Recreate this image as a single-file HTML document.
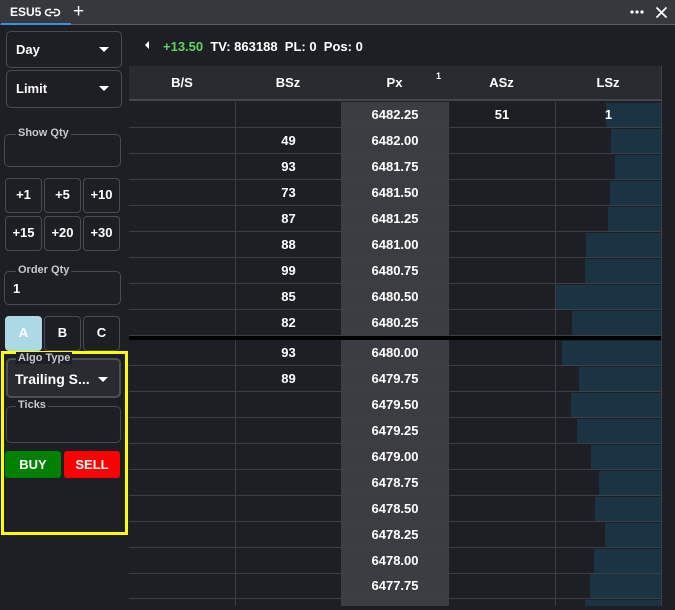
<!DOCTYPE html><html><head><style>
*{box-sizing:border-box;margin:0;padding:0}
body{width:675px;height:610px;background:#1e1f24;font-family:"Liberation Sans",sans-serif;color:#fff;font-weight:bold;font-size:13px;position:relative;overflow:hidden}
.a{position:absolute}
.box{position:absolute;border:1px solid #4a4b50;border-radius:5px}
.caret{position:absolute;width:0;height:0;border-left:5px solid transparent;border-right:5px solid transparent;border-top:5px solid #fff}
.lg{position:absolute;font-size:11px;color:#c8c8cc;background:#1e1f24;padding:0 2px;font-weight:bold;line-height:12px}
.btn{position:absolute;border:1px solid #4a4b50;border-radius:4px;text-align:center;line-height:32px;font-size:13px}
.row{position:absolute;left:129px;width:532px;height:26px;border-bottom:1px solid #3e3f44}
.c{position:absolute;top:0;height:25px;line-height:26px;text-align:center;border-left:1px solid #3e3f44}
.px{background:#3c3d42;left:212px;width:107px}
.bar{position:absolute;top:1px;right:0;height:24px;background:#1b3444}
</style></head><body>
<div class="a" style="left:0;top:0;width:675px;height:25px;background:#37383d;border-bottom:1px solid #5c5d62"></div>
<div class="a" style="left:1px;top:23px;width:70px;height:2px;background:#3d8fe0"></div>
<div class="a" style="left:10px;top:5px;font-size:12px">ESU5</div>
<svg class="a" style="left:44px;top:7px" width="17" height="11" viewBox="0 0 17 11"><path d="M7 2.5H4.5a3 3 0 0 0 0 6H7M10 2.5h2.5a3 3 0 0 1 0 6H10M5.5 5.5h6" fill="none" stroke="#fff" stroke-width="1.6"/></svg>
<div class="a" style="left:73px;top:1px;font-size:19px;font-weight:normal">+</div>
<svg class="a" style="left:630px;top:9px" width="14" height="6" viewBox="0 0 14 6"><circle cx="2" cy="3" r="1.6" fill="#fff"/><circle cx="7" cy="3" r="1.6" fill="#fff"/><circle cx="12" cy="3" r="1.6" fill="#fff"/></svg>
<svg class="a" style="left:655px;top:6px" width="13" height="13" viewBox="0 0 13 13"><path d="M1.5 1.5L11.5 11.5M11.5 1.5L1.5 11.5" stroke="#fff" stroke-width="1.8"/></svg>

<div class="box" style="left:6px;top:31px;width:116px;height:37px"></div>
<div class="a" style="left:16px;top:42px">Day</div><div class="caret" style="left:99px;top:47px"></div>
<div class="box" style="left:6px;top:70px;width:116px;height:38px"></div>
<div class="a" style="left:16px;top:81px">Limit</div><div class="caret" style="left:99px;top:86px"></div>

<div class="box" style="left:4px;top:134px;width:117px;height:33px"></div><div class="lg" style="left:16px;top:127px">Show Qty</div>
<div class="btn" style="left:5px;top:178px;width:37px;height:35px">+1</div>
<div class="btn" style="left:44px;top:178px;width:37px;height:35px">+5</div>
<div class="btn" style="left:83px;top:178px;width:37px;height:35px">+10</div>
<div class="btn" style="left:5px;top:216px;width:37px;height:35px">+15</div>
<div class="btn" style="left:44px;top:216px;width:37px;height:35px">+20</div>
<div class="btn" style="left:83px;top:216px;width:37px;height:35px">+30</div>
<div class="box" style="left:4px;top:271px;width:117px;height:34px"></div><div class="lg" style="left:16px;top:264px">Order Qty</div>
<div class="a" style="left:13px;top:281px">1</div>
<div class="btn" style="left:5px;top:316px;width:37px;height:35px;background:#add8e6;border-color:#add8e6">A</div>
<div class="btn" style="left:44px;top:316px;width:37px;height:35px">B</div>
<div class="btn" style="left:83px;top:316px;width:37px;height:35px">C</div>

<div class="a" style="left:1px;top:351px;width:127px;height:184px;border:3px solid #ffff00"></div>
<div class="box" style="left:6px;top:358px;width:115px;height:40px;background:#2a2b30;border:2px solid #4e4f54"></div>
<div class="lg" style="left:16px;top:352px;background:#1e1f24">Algo Type</div>
<div class="a" style="left:15px;top:371px;font-size:14px">Trailing S...</div><div class="caret" style="left:98px;top:377px"></div>
<div class="box" style="left:6px;top:406px;width:115px;height:37px"></div><div class="lg" style="left:16px;top:399px">Ticks</div>
<div class="a" style="left:5px;top:451px;width:56px;height:27px;background:#008000;border-radius:3px;text-align:center;line-height:27px">BUY</div>
<div class="a" style="left:64px;top:451px;width:56px;height:27px;background:#ff0000;border-radius:3px;text-align:center;line-height:27px">SELL</div>

<div class="a" style="left:145px;top:41px;width:0;height:0;border-top:4px solid transparent;border-bottom:4px solid transparent;border-right:4px solid #fff"></div>
<div class="a" style="left:163px;top:39px"><span style="color:#5fd35f">+13.50</span>&nbsp; TV: 863188 &nbsp;PL: 0 &nbsp;Pos: 0</div>

<div class="a" style="left:129px;top:66px;width:532px;height:35px;background:#2a2b30;border-bottom:2px solid #46474c"></div>
<div class="a" style="left:129px;top:75px;width:106px;text-align:center">B/S</div>
<div class="a" style="left:235px;top:75px;width:106px;text-align:center">BSz</div>
<div class="a" style="left:341px;top:75px;width:107px;text-align:center">Px</div>
<div class="a" style="left:436px;top:71px;font-size:9px">1</div>
<div class="a" style="left:448px;top:75px;width:107px;text-align:center">ASz</div>
<div class="a" style="left:555px;top:75px;width:106px;text-align:center">LSz</div>

<div class="row" style="top:102px"><div class="c" style="left:0;width:106px;border:0"></div><div class="c" style="left:106px;width:106px"></div><div class="c px">6482.25</div><div class="c" style="left:319px;width:107px">51</div><div class="c" style="left:426px;width:106px"><div class="bar" style="width:55px"></div><span style="position:relative">1</span></div></div>
<div class="row" style="top:128px"><div class="c" style="left:106px;width:106px">49</div><div class="c px">6482.00</div><div class="c" style="left:319px;width:107px"></div><div class="c" style="left:426px;width:106px"><div class="bar" style="width:50px"></div></div></div>
<div class="row" style="top:154px"><div class="c" style="left:106px;width:106px">93</div><div class="c px">6481.75</div><div class="c" style="left:319px;width:107px"></div><div class="c" style="left:426px;width:106px"><div class="bar" style="width:46px"></div></div></div>
<div class="row" style="top:180px"><div class="c" style="left:106px;width:106px">73</div><div class="c px">6481.50</div><div class="c" style="left:319px;width:107px"></div><div class="c" style="left:426px;width:106px"><div class="bar" style="width:51px"></div></div></div>
<div class="row" style="top:206px"><div class="c" style="left:106px;width:106px">87</div><div class="c px">6481.25</div><div class="c" style="left:319px;width:107px"></div><div class="c" style="left:426px;width:106px"><div class="bar" style="width:53px"></div></div></div>
<div class="row" style="top:232px"><div class="c" style="left:106px;width:106px">88</div><div class="c px">6481.00</div><div class="c" style="left:319px;width:107px"></div><div class="c" style="left:426px;width:106px"><div class="bar" style="width:75px"></div></div></div>
<div class="row" style="top:258px"><div class="c" style="left:106px;width:106px">99</div><div class="c px">6480.75</div><div class="c" style="left:319px;width:107px"></div><div class="c" style="left:426px;width:106px"><div class="bar" style="width:76px"></div></div></div>
<div class="row" style="top:284px"><div class="c" style="left:106px;width:106px">85</div><div class="c px">6480.50</div><div class="c" style="left:319px;width:107px"></div><div class="c" style="left:426px;width:106px"><div class="bar" style="width:105px"></div></div></div>
<div class="row" style="top:310px"><div class="c" style="left:106px;width:106px">82</div><div class="c px">6480.25</div><div class="c" style="left:319px;width:107px"></div><div class="c" style="left:426px;width:106px"><div class="bar" style="width:89px"></div></div></div>
<div class="a" style="left:129px;top:336px;width:532px;height:4px;background:#000"></div>
<div class="row" style="top:340px"><div class="c" style="left:106px;width:106px">93</div><div class="c px">6480.00</div><div class="c" style="left:319px;width:107px"></div><div class="c" style="left:426px;width:106px"><div class="bar" style="width:99px"></div></div></div>
<div class="row" style="top:366px"><div class="c" style="left:106px;width:106px">89</div><div class="c px">6479.75</div><div class="c" style="left:319px;width:107px"></div><div class="c" style="left:426px;width:106px"><div class="bar" style="width:82px"></div></div></div>
<div class="row" style="top:392px"><div class="c" style="left:106px;width:106px"></div><div class="c px">6479.50</div><div class="c" style="left:319px;width:107px"></div><div class="c" style="left:426px;width:106px"><div class="bar" style="width:90px"></div></div></div>
<div class="row" style="top:418px"><div class="c" style="left:106px;width:106px"></div><div class="c px">6479.25</div><div class="c" style="left:319px;width:107px"></div><div class="c" style="left:426px;width:106px"><div class="bar" style="width:84px"></div></div></div>
<div class="row" style="top:444px"><div class="c" style="left:106px;width:106px"></div><div class="c px">6479.00</div><div class="c" style="left:319px;width:107px"></div><div class="c" style="left:426px;width:106px"><div class="bar" style="width:70px"></div></div></div>
<div class="row" style="top:470px"><div class="c" style="left:106px;width:106px"></div><div class="c px">6478.75</div><div class="c" style="left:319px;width:107px"></div><div class="c" style="left:426px;width:106px"><div class="bar" style="width:62px"></div></div></div>
<div class="row" style="top:496px"><div class="c" style="left:106px;width:106px"></div><div class="c px">6478.50</div><div class="c" style="left:319px;width:107px"></div><div class="c" style="left:426px;width:106px"><div class="bar" style="width:66px"></div></div></div>
<div class="row" style="top:522px"><div class="c" style="left:106px;width:106px"></div><div class="c px">6478.25</div><div class="c" style="left:319px;width:107px"></div><div class="c" style="left:426px;width:106px"><div class="bar" style="width:56px"></div></div></div>
<div class="row" style="top:548px"><div class="c" style="left:106px;width:106px"></div><div class="c px">6478.00</div><div class="c" style="left:319px;width:107px"></div><div class="c" style="left:426px;width:106px"><div class="bar" style="width:67px"></div></div></div>
<div class="row" style="top:573px"><div class="c" style="left:106px;width:106px"></div><div class="c px">6477.75</div><div class="c" style="left:319px;width:107px"></div><div class="c" style="left:426px;width:106px"><div class="bar" style="width:71px"></div></div></div>
<div class="row" style="top:599px;height:7px;border:0"><div class="c" style="left:106px;width:106px;height:7px"></div><div class="c px" style="height:7px"></div><div class="c" style="left:319px;width:107px;height:7px"></div><div class="c" style="left:426px;width:106px;height:7px"><div class="bar" style="width:76px;height:6px"></div></div></div>
<div class="a" style="left:661px;top:66px;width:1px;height:540px;background:#3e3f44"></div>
</body></html>
